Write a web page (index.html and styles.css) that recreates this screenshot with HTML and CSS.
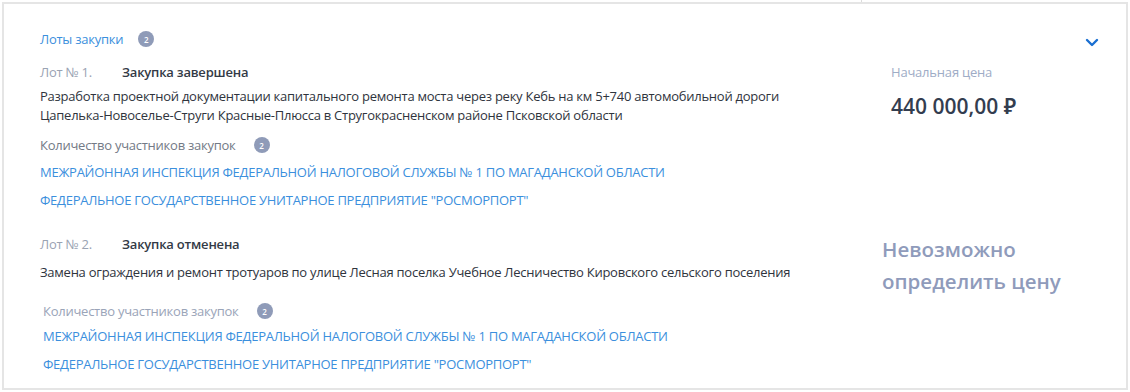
FILE: index.html
```html
<!DOCTYPE html>
<html lang="ru">
<head>
    <meta charset="UTF-8">
    <title>Лоты закупки</title>
    <link rel="stylesheet" href="styles.css">
</head>
<body>
    <div class="top-strip"><div class="top-cell"></div></div>
    <div class="lots-card">
        <div class="lots-header">
            <span class="lots-title">Лоты закупки</span>
            <span class="badge">2</span>
            <svg class="chevron" width="14" height="9" viewBox="0 0 14 9">
                <path d="M2 2l5 5 5-5" fill="none" stroke="#1a6fd1" stroke-width="2.4" stroke-linecap="round" stroke-linejoin="round"/>
            </svg>
        </div>

        <!-- Lot 1 -->
        <div class="lot">
            <div class="lot-main">
                <div class="lot-head">
                    <span class="lot-num">Лот № 1.</span>
                    <span class="lot-status">Закупка завершена</span>
                </div>
                <div class="lot-desc">Разработка проектной документации капитального ремонта моста через реку Кебь на км 5+740 автомобильной дороги Цапелька-Новоселье-Струги Красные-Плюсса в Стругокрасненском районе Псковской области</div>
                <div class="members">
                    <span class="members-title">Количество участников закупок</span>
                    <span class="badge badge-wide">2</span>
                </div>
                <a class="member-link" href="#">МЕЖРАЙОННАЯ ИНСПЕКЦИЯ ФЕДЕРАЛЬНОЙ НАЛОГОВОЙ СЛУЖБЫ № 1 ПО МАГАДАНСКОЙ ОБЛАСТИ</a>
                <a class="member-link" href="#">ФЕДЕРАЛЬНОЕ ГОСУДАРСТВЕННОЕ УНИТАРНОЕ ПРЕДПРИЯТИЕ "РОСМОРПОРТ"</a>
            </div>
            <div class="lot-price">
                <div class="price-label">Начальная цена</div>
                <div class="price-value">440 000,00 ₽</div>
            </div>
        </div>

        <!-- Lot 2 -->
        <div class="lot lot-second">
            <div class="lot-main">
                <div class="lot-head">
                    <span class="lot-num">Лот № 2.</span>
                    <span class="lot-status">Закупка отменена</span>
                </div>
                <div class="lot-desc desc-second">Замена ограждения и ремонт тротуаров по улице Лесная поселка Учебное Лесничество Кировского сельского поселения</div>
                <div class="members members-shifted">
                    <span class="members-title members-light">Количество участников закупок</span>
                    <span class="badge badge-wide">2</span>
                </div>
                <a class="member-link link-shifted link-first" href="#">МЕЖРАЙОННАЯ ИНСПЕКЦИЯ ФЕДЕРАЛЬНОЙ НАЛОГОВОЙ СЛУЖБЫ № 1 ПО МАГАДАНСКОЙ ОБЛАСТИ</a>
                <a class="member-link link-shifted" href="#">ФЕДЕРАЛЬНОЕ ГОСУДАРСТВЕННОЕ УНИТАРНОЕ ПРЕДПРИЯТИЕ "РОСМОРПОРТ"</a>
            </div>
            <div class="lot-price">
                <div class="price-none">Невозможно определить цену</div>
            </div>
        </div>
    </div>
</body>
</html>
```

FILE: styles.css
```css
body {
    margin: 0;
    font-family: "Open Sans", "Noto Sans", sans-serif;
    background-color: #ffffff;
    color: #333a46;
}
.top-strip {
    height: 2px;
}
.top-cell {
    width: 862px;
    height: 2px;
    border-right: 1px solid #dcdcdc;
    box-sizing: border-box;
}
.lots-card {
    margin: 0 2px 0 2px;
    width: 1126px;
    height: 388px;
    box-sizing: border-box;
    border: 2px solid #e5e5e5;
    padding: 24px 0 0 36px;
}
.lots-header {
    display: flex;
    align-items: center;
    height: 22px;
}
.lots-title {
    font-size: 13px;
    color: #3b8fdd;
    letter-spacing: -0.25px;
}
.badge {
    display: inline-flex;
    align-items: center;
    justify-content: center;
    width: 16px;
    height: 16px;
    border-radius: 50%;
    background-color: #8f9bb8;
    color: #ffffff;
    font-size: 8px;
    font-weight: 600;
    margin-left: 15px;
}
.badge-wide {
    margin-left: 18px;
}
.chevron {
    margin-left: auto;
    margin-right: 27px;
    margin-top: 6px;
}
.lot {
    display: flex;
    margin-top: 11px;
}
.lot-second {
    margin-top: 22px;
}
.lot-main {
    width: 850px;
}
.lot-head {
    display: flex;
    align-items: center;
    height: 22px;
}
.lot-num {
    width: 82px;
    font-size: 13px;
    color: #9aa3b3;
    letter-spacing: -0.25px;
}
.lot-status {
    font-size: 13px;
    font-weight: 600;
    color: #333a46;
    letter-spacing: -0.2px;
}
.lot-desc {
    margin-top: 4px;
    font-size: 13px;
    line-height: 19px;
    color: #2f343d;
    letter-spacing: -0.25px;
    width: 790px;
}
.desc-second {
    margin-top: 8px;
}
.members {
    display: flex;
    align-items: center;
    margin-top: 10px;
    height: 20px;
}
.members-shifted {
    margin-top: 19px;
    margin-left: 3px;
}
.members-title {
    font-size: 13px;
    color: #737a86;
    letter-spacing: -0.25px;
}
.members-light {
    color: #9aa4b8;
}
.member-link {
    display: block;
    margin-top: 6px;
    font-size: 13px;
    line-height: 22px;
    color: #3b8fdd;
    text-decoration: none;
    letter-spacing: -0.26px;
}
.link-shifted {
    margin-left: 3px;
}
.link-first {
    margin-top: 4px;
}
.lot-price {
    padding-left: 1px;
}
.price-label {
    font-size: 13px;
    color: #9eacc6;
    height: 22px;
    line-height: 22px;
    letter-spacing: -0.2px;
}
.price-value {
    margin-top: 9px;
    font-size: 21px;
    line-height: 28px;
    font-weight: 600;
    color: #333d4f;
}
.price-none {
    margin-left: -9px;
    width: 210px;
    font-size: 20.5px;
    line-height: 32px;
    font-weight: 600;
    color: #8f9bbb;
}
```
